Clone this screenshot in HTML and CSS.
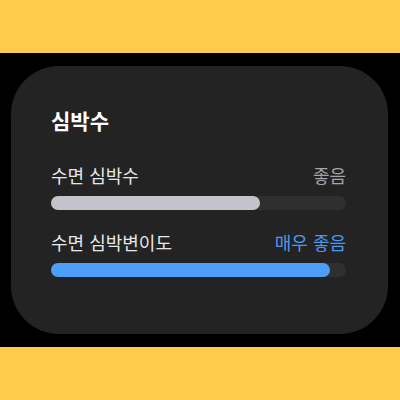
FILE: index.html
```html
<!DOCTYPE html>
<html lang="ko">
<head>
  <meta charset="utf-8" />
  <title>심박수</title>
  <meta name="viewport" content="width=device-width, initial-scale=1.0" />
  <link rel="stylesheet" href="styles.css">
</head>

<body>
  <div class="band"></div>

  <div class="stage">
    <div class="card">
      <div class="card-title">심박수</div>

      <div class="metric">
        <div class="metric-head">
          <span class="metric-name">수면 심박수</span>
          <span class="metric-grade">좋음</span>
        </div>
        <div class="track">
          <div class="fill fill-gray" style="width: 71%"></div>
        </div>
      </div>

      <div class="metric">
        <div class="metric-head">
          <span class="metric-name">수면 심박변이도</span>
          <span class="metric-grade grade-best">매우 좋음</span>
        </div>
        <div class="track">
          <div class="fill fill-blue" style="width: 94.6%"></div>
        </div>
      </div>
    </div>
  </div>

  <div class="band"></div>
</body>
</html>
```

FILE: styles.css
```css
html, body {
  margin: 0;
  padding: 0;
  height: 100%;
  background-color: #ffcc4b;
  font-family: "Noto Sans CJK KR", "Noto Sans", sans-serif;
}

.band {
  height: 53px;
  background-color: #ffcc4b;
}

.stage {
  background-color: #000;
  height: 294px;
  box-sizing: border-box;
  padding: 13px 12px 13px 11px;
}

.card {
  height: 100%;
  box-sizing: border-box;
  background-color: #232323;
  border-radius: 48px;
  padding: 41px 42px 0 40px;
}

.card-title {
  color: #fff;
  font-size: 21px;
  font-weight: 700;
  line-height: 26px;
  margin-bottom: 30px;
}

.metric {
  margin-bottom: 20px;
}

.metric-head {
  display: flex;
  justify-content: space-between;
  align-items: center;
  font-size: 18px;
  line-height: 24px;
  margin-bottom: 9px;
}

.metric-name {
  color: #e6e6e6;
}

.metric-grade {
  color: #a4a4a8;
}

.grade-best {
  color: #4e98eb;
}

.track {
  height: 14px;
  border-radius: 7px;
  background-color: #2f2f2f;
}

.fill {
  height: 100%;
  border-radius: 7px;
}

.fill-gray {
  background-color: #c3c3cb;
}

.fill-blue {
  background-color: #4d9ef8;
}
```
